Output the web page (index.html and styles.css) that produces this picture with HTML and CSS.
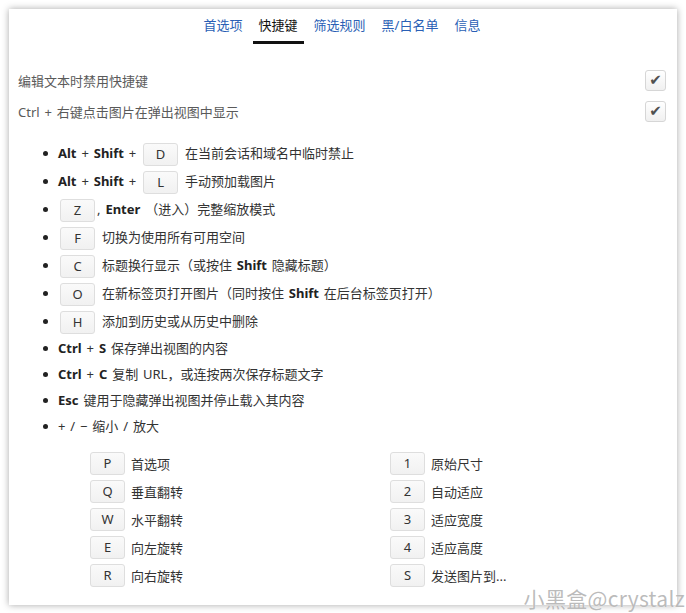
FILE: index.html
```html
<!DOCTYPE html>
<html lang="zh-CN">
<head>
    <meta charset="UTF-8">
    <title>快捷键</title>
    <link rel="stylesheet" href="styles.css">
</head>
<body>

<div class="panel">
    <nav class="tabs">
        <a class="tab">首选项</a>
        <a class="tab active">快捷键</a>
        <a class="tab">筛选规则</a>
        <a class="tab">黑/白名单</a>
        <a class="tab">信息</a>
    </nav>

    <div class="option">
        <span>编辑文本时禁用快捷键</span>
        <span class="check">&#10004;</span>
    </div>
    <div class="option">
        <span>Ctrl + 右键点击图片在弹出视图中显示</span>
        <span class="check">&#10004;</span>
    </div>

    <ul class="shortcuts">
        <li class="key-row"><b>Alt</b> + <b>Shift</b> + <kbd>D</kbd> 在当前会话和域名中临时禁止</li>
        <li class="key-row"><b>Alt</b> + <b>Shift</b> + <kbd>L</kbd> 手动预加载图片</li>
        <li class="key-row"><kbd>Z</kbd>, <b>Enter</b> （进入）完整缩放模式</li>
        <li class="key-row"><kbd>F</kbd> 切换为使用所有可用空间</li>
        <li class="key-row"><kbd>C</kbd> 标题换行显示（或按住 <b>Shift</b> 隐藏标题）</li>
        <li class="key-row"><kbd>O</kbd> 在新标签页打开图片（同时按住 <b>Shift</b> 在后台标签页打开）</li>
        <li class="key-row"><kbd>H</kbd> 添加到历史或从历史中删除</li>
        <li><b>Ctrl</b> + <b>S</b> 保存弹出视图的内容</li>
        <li><b>Ctrl</b> + <b>C</b> 复制 URL，或连按两次保存标题文字</li>
        <li><b>Esc</b> 键用于隐藏弹出视图并停止载入其内容</li>
        <li>+ / − 缩小 / 放大</li>
    </ul>

    <div class="key-grid">
        <div class="key-item"><kbd>P</kbd>首选项</div>
        <div class="key-item"><kbd>1</kbd>原始尺寸</div>
        <div class="key-item"><kbd>Q</kbd>垂直翻转</div>
        <div class="key-item"><kbd>2</kbd>自动适应</div>
        <div class="key-item"><kbd>W</kbd>水平翻转</div>
        <div class="key-item"><kbd>3</kbd>适应宽度</div>
        <div class="key-item"><kbd>E</kbd>向左旋转</div>
        <div class="key-item"><kbd>4</kbd>适应高度</div>
        <div class="key-item"><kbd>R</kbd>向右旋转</div>
        <div class="key-item"><kbd>S</kbd>发送图片到...</div>
    </div>
</div>

<div class="watermark">小黑盒@crystalz</div>

</body>
</html>
```

FILE: styles.css
```css
/* Page */
body {
    margin: 0;
    padding: 9px;
    font-family: 'Noto Sans', 'Noto Sans CJK SC', sans-serif;
    font-size: 13px;
    word-spacing: 1.5px;
    color: #333;
    background: #fff;
    overflow: hidden;
}

/* Main card */
.panel {
    width: 668px;
    height: 596px;
    box-sizing: border-box;
    background: #fff;
    box-shadow: 0 0 7px rgba(0, 0, 0, 0.35);
}

/* Tabs */
.tabs {
    display: flex;
    justify-content: center;
    gap: 4px;
    padding-top: 7px;
    padding-right: 2px;
}

.tab {
    padding: 0 6px 7px;
    line-height: 18px;
    color: #2a5fb5;
    border-bottom: 3px solid transparent;
    cursor: pointer;
}

.tab.active {
    color: #111;
    border-bottom-color: #111;
}

/* Checkbox options */
.option {
    display: flex;
    justify-content: space-between;
    align-items: center;
    height: 31px;
    padding: 0 11px 0 9px;
    color: #5a5a5a;
}

.tabs + .option {
    margin-top: 21px;
}

.check {
    width: 19px;
    height: 19px;
    border: 1px solid #d6d6d6;
    border-radius: 3px;
    background: linear-gradient(#fff, #f0f0f0);
    color: #505050;
    font-family: 'DejaVu Sans', sans-serif;
    font-size: 15px;
    line-height: 19px;
    text-align: center;
}

/* Shortcut list */
.shortcuts {
    margin: 12px 0 0;
    padding: 0 0 0 49px;
    list-style: none;
}

.shortcuts li {
    position: relative;
    height: 26px;
    line-height: 26px;
    white-space: nowrap;
}

.shortcuts li::before {
    content: '';
    position: absolute;
    left: -15px;
    top: 50%;
    width: 5px;
    height: 5px;
    margin-top: -2px;
    border-radius: 50%;
    background: #222;
}

.shortcuts li.key-row {
    height: 28px;
    line-height: 28px;
}

b {
    font-weight: 700;
    color: #222;
}

kbd {
    display: inline-block;
    box-sizing: border-box;
    width: 35px;
    height: 23px;
    margin: 0 2px;
    border: 1px solid #dedede;
    border-radius: 3px;
    background: linear-gradient(#fafafa, #f1f1f1);
    font-family: 'Noto Sans', sans-serif;
    font-size: 13px;
    line-height: 21px;
    text-align: center;
    vertical-align: middle;
    color: #333;
    word-spacing: 0;
}

/* Key grid */
.key-grid {
    display: grid;
    grid-template-columns: 300px 300px;
    margin: 10px 0 0 81px;
}

.key-item {
    display: flex;
    align-items: center;
    height: 28px;
}

.key-item kbd {
    margin: 0 6px 0 0;
}

/* Watermark */
.watermark {
    position: absolute;
    right: 1px;
    bottom: 1px;
    font-family: 'Noto Sans CJK SC', sans-serif;
    font-size: 21px;
    line-height: 28px;
    color: rgba(165, 165, 165, 0.75);
    text-shadow: 0 0 1px #fff;
    letter-spacing: 0.3px;
    word-spacing: 0;
}
```
